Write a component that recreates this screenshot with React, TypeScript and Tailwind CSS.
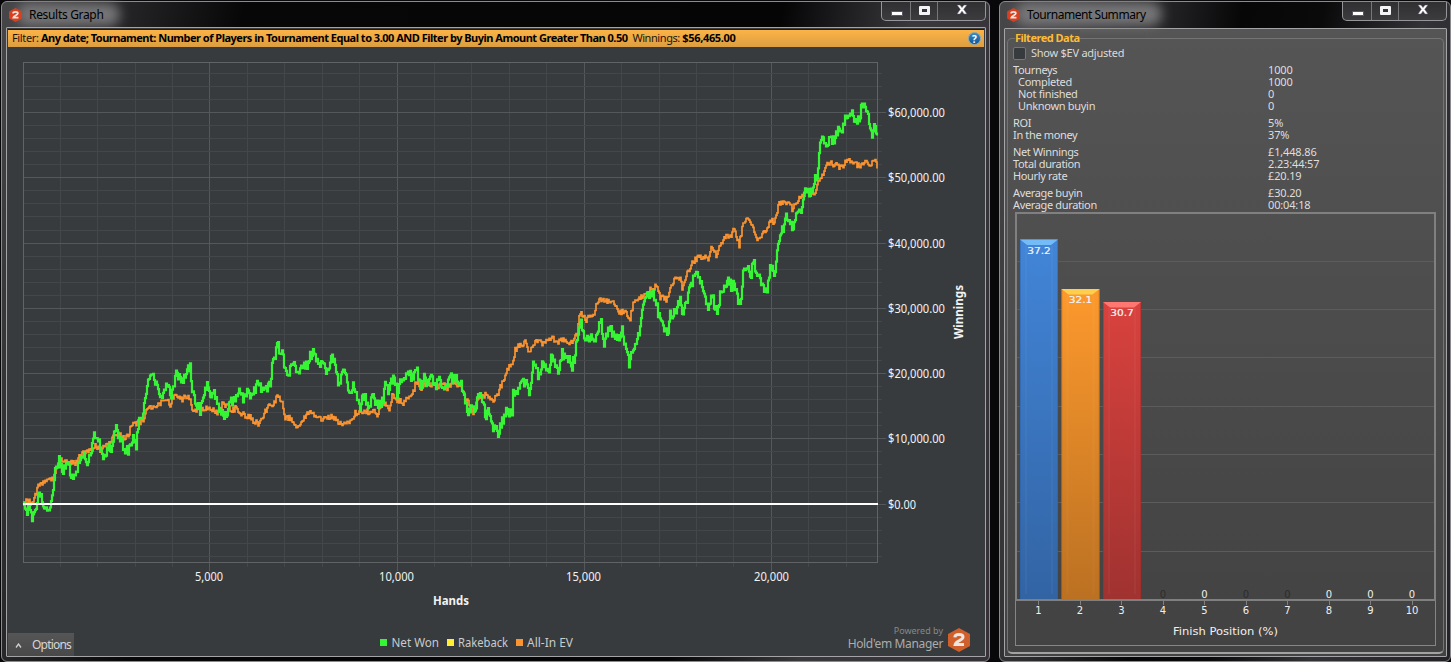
import React from "react";

type Point = [number, number];

// Key points of the two series in chart units.
const EV: Point[] = [[23,502],[28,501],[32,503],[35,496],[38,485],[45,480],[52,480],[55,471],[59,459],[63,461],[75,464],[80,456],[82,452],[90,450],[96,446],[100,451],[110,442],[115,433],[122,437],[128,437],[131,424],[138,423],[143,420],[147,410],[155,405],[160,403],[167,400],[170,404],[173,397],[177,395],[182,400],[188,395],[192,408],[200,410],[207,408],[217,413],[223,403],[232,410],[237,408],[241,413],[245,417],[250,415],[253,422],[259,424],[263,415],[268,408],[273,403],[277,397],[282,402],[285,417],[290,418],[294,427],[298,427],[303,418],[312,411],[317,418],[323,420],[331,417],[340,423],[350,421],[355,413],[360,413],[365,411],[370,414],[373,408],[377,415],[383,403],[389,408],[392,396],[397,400],[403,403],[407,397],[411,398],[415,385],[418,383],[421,390],[425,382],[430,385],[438,388],[443,383],[447,388],[452,382],[460,387],[465,397],[473,412],[478,398],[487,395],[493,401],[497,395],[502,382],[508,368],[512,365],[515,350],[520,345],[525,342],[529,352],[534,342],[543,343],[552,337],[557,343],[562,339],[566,343],[573,342],[577,333],[579,315],[581,313],[585,320],[593,315],[597,303],[602,298],[608,302],[615,303],[617,311],[627,314],[630,318],[633,305],[640,297],[647,292],[657,286],[660,297],[667,300],[670,287],[675,280],[680,280],[682,288],[688,270],[693,262],[698,257],[709,259],[711,248],[717,257],[720,243],[727,235],[730,236],[734,230],[739,245],[742,227],[747,219],[752,225],[757,238],[761,237],[763,229],[766,231],[770,222],[775,221],[778,205],[788,203],[792,209],[797,202],[803,194],[808,190],[815,192],[818,180],[823,173],[828,163],[835,165],[840,168],[848,160],[855,162],[858,166],[865,162],[868,163],[871,168],[873,158],[877,167]];
const NET: Point[] = [[23,505],[26,513],[28,507],[32,519],[35,507],[40,492],[43,507],[50,508],[52,493],[55,473],[59,461],[63,469],[68,463],[70,473],[74,478],[78,467],[83,453],[87,462],[91,453],[93,437],[97,437],[100,448],[103,458],[109,448],[111,453],[113,437],[116,428],[120,438],[125,450],[129,450],[132,438],[136,445],[139,420],[143,412],[146,397],[148,382],[154,377],[159,392],[165,394],[167,382],[171,397],[174,382],[176,369],[180,380],[183,378],[187,368],[190,368],[192,388],[196,403],[200,410],[203,395],[207,387],[210,397],[214,392],[218,408],[223,417],[227,415],[229,398],[233,403],[239,386],[243,398],[248,392],[252,397],[257,383],[264,392],[270,383],[272,368],[275,355],[278,342],[280,355],[282,347],[284,365],[288,377],[293,363],[297,375],[301,363],[308,367],[310,356],[313,354],[317,358],[319,368],[322,360],[326,371],[330,366],[331,356],[335,360],[338,388],[341,376],[346,372],[348,391],[351,397],[353,387],[356,397],[360,411],[363,392],[368,406],[372,397],[379,405],[383,400],[385,384],[388,392],[391,378],[395,383],[397,393],[402,377],[407,374],[413,378],[417,370],[421,387],[424,377],[428,387],[431,373],[435,388],[439,378],[445,391],[449,378],[457,380],[463,388],[465,403],[468,411],[472,405],[474,409],[479,395],[483,398],[485,416],[488,412],[493,427],[498,433],[502,422],[506,410],[512,414],[513,395],[518,388],[525,382],[529,392],[533,365],[539,376],[543,362],[548,375],[552,354],[558,370],[562,354],[566,355],[572,366],[575,355],[577,335],[581,324],[586,342],[590,335],[595,342],[597,330],[601,323],[604,342],[610,328],[617,341],[622,329],[625,347],[629,363],[633,347],[637,343],[641,318],[646,297],[655,295],[658,313],[662,322],[667,335],[670,315],[675,312],[680,302],[682,316],[688,295],[693,280],[698,273],[703,293],[708,307],[712,297],[717,313],[721,288],[725,290],[728,281],[732,288],[734,281],[737,297],[740,308],[743,275],[747,269],[751,278],[753,260],[757,273],[762,285],[766,296],[770,270],[775,272],[778,242],[782,230],[786,217],[788,222],[793,228],[797,215],[801,213],[806,186],[810,196],[815,180],[817,177],[819,150],[823,137],[826,142],[830,138],[833,140],[838,131],[841,133],[844,123],[848,112],[850,118],[852,106],[854,117],[859,122],[861,108],[864,105],[867,113],[870,131],[872,136],[874,120],[877,134]];

// Hand-to-hand variance drawn around the key points, as a stepped line.
function trace(points: Point[], spread: number, salt: number): string {
  let d = `M${points[0][0]} ${points[0][1]}`;
  for (let i = 1; i < points.length; i++) {
    const [x0, y0] = points[i - 1];
    const [x1, y1] = points[i];
    for (let x = x0 + 1; x <= x1; x++) {
      const s = Math.sin(x * 127.1 + salt) * 43758.5453;
      const n = (s - Math.floor(s) - 0.5) * 2 * spread;
      const y = y0 + ((y1 - y0) * (x - x0)) / (x1 - x0) + n;
      d += `H${x}V${y.toFixed(1)}`;
    }
  }
  return d;
}

const range = (n: number) => Array.from({ length: n }, (_, i) => i);

function Logo({ className, fill }: { className: string; fill: string }) {
  return (
    <svg className={className} viewBox="0 0 22 24">
      <path d="M11 0 22 6V18L11 24 0 18V6Z" fill={fill} />
      <path
        d="M6.800 9.400C7 7.200 8.600 6.600 11 6.600c2.500 0 4 .8 4 2.500 0 1.700-1.200 2.300-3.200 3.300-2.300 1.200-4.200 2-4.600 4H16"
        fill="none"
        stroke="#ece4e0"
        strokeWidth="3"
      />
    </svg>
  );
}

function Controls() {
  return (
    <div className="flex h-[19px] w-[105px] rounded-b-[5px] border border-t-0 border-[#96969a] bg-gradient-to-b from-[#303033] to-[#3c3c3e]">
      <div className="flex w-[29px] justify-center border-r border-[#77777b] pl-px pt-[9px]">
        <div className="h-[5px] w-[12px] rounded-[1px] border border-[#55566a] bg-white" />
      </div>
      <div className="flex w-[27px] justify-center border-r border-[#77777b] pt-[4px]">
        <div className="h-[9px] w-[11px] rounded-[1px] border-[3px] border-[#f4f4f6] bg-[#33343c]" />
      </div>
      <div className="flex flex-1 justify-center pt-[2px]">
        <svg className="h-[11px] w-[12px]" viewBox="0 0 12 11">
          <path d="M1 1H4L6 3.600 8 1H11L7.700 5.300 11 10H8L6 7.200 4 10H1L4.300 5.300Z" fill="#fff" stroke="#55566a" strokeWidth=".5" />
        </svg>
      </div>
    </div>
  );
}

function TitleBar({ title, className, track }: { title: string; className: string; track: string }) {
  return (
    <div className={className}>
      <div className="flex h-[25px] items-center pl-[3px]">
        <Logo className="relative z-10 h-[14px] w-[13px]" fill="#d8401f" />
        <div className="relative ml-[7px]">
          <div className="absolute -left-3 -right-4 bottom-0 -top-px rounded-full bg-[#777779] blur-[6px]" />
          <span className={track}>{title}</span>
        </div>
      </div>
      <Controls />
    </div>
  );
}

const xLabels: [string, number, number][] = [["5,000", 209, 28], ["10,000", 396.5, 35], ["15,000", 583.5, 35], ["20,000", 771.5, 35]];

function WinningsChart() {
  return (
    <svg className="ml-px block h-[609px] w-[977px] shrink-0" viewBox="8 47 977 609" fontFamily="'Noto Sans', sans-serif">
      <g shapeRendering="crispEdges" strokeWidth="1">
        {range(22).map((i) => {
          const x = Math.floor(22.8 + (i + 1) * 37.43) + 0.5;
          const major = (i + 1) % 5 === 0;
          return <path key={i} d={`M${x} 63V${major ? 571 : 567}`} stroke={major ? "#54585a" : "#434749"} />;
        })}
        {range(38).map((i) => {
          const y = Math.floor(73.4 + i * 13.05) + 0.5;
          if (y > 562) return null;
          const major = i % 5 === 3;
          return <path key={i} d={`M23 ${y}H${major ? 886 : 882}`} stroke={major ? "#54585a" : "#434749"} />;
        })}
        <rect x="23.5" y="62.5" width="854" height="500" fill="none" stroke="#606466" />
      </g>
      <path d={trace(EV, 3, 3)} fill="none" stroke="#fb9430" strokeWidth="1.7" />
      <path d={trace(NET, 5.2, 8)} fill="none" stroke="#35f535" strokeWidth="2.2" />
      <path d="M23 504H878" stroke="#fff" strokeWidth="2" />
      <g fill="#f2f2f2" fontSize="12">
        {range(7).map((i) => (
          <text key={i} x="888" y={116.9 + i * 65.3} textLength={i === 6 ? 28 : 57} lengthAdjust="spacingAndGlyphs">
            {i === 6 ? "$0.00" : `$${60 - i * 10},000.00`}
          </text>
        ))}
        {xLabels.map(([t, x, w]) => (
          <text key={t} x={x - w / 2} y="581" textLength={w} lengthAdjust="spacingAndGlyphs">{t}</text>
        ))}
        <g fontWeight="700">
          <text x="433" y="605" textLength="36" lengthAdjust="spacingAndGlyphs">Hands</text>
          <text transform="translate(963 339) rotate(-90)" textLength="54" lengthAdjust="spacingAndGlyphs">Winnings</text>
        </g>
      </g>
      <g fill="#c9cbcc" fontSize="12.5">
        <rect x="380" y="639" width="7" height="7" fill="#35f535" />
        <text x="391.5" y="647" textLength="47.5" lengthAdjust="spacingAndGlyphs">Net Won</text>
        <rect x="447" y="639" width="7" height="7" fill="#ffee32" />
        <text x="458" y="647" textLength="50" lengthAdjust="spacingAndGlyphs">Rakeback</text>
        <rect x="516" y="639" width="7" height="7" fill="#fb9430" />
        <text x="527" y="647" textLength="46" lengthAdjust="spacingAndGlyphs">All-In EV</text>
      </g>
    </svg>
  );
}

const bars = [
  { x: 1020, y: 239.5, v: "37.2", face: "url(#blue)", top: "#74bcf8", edge: "#2a5c9c" },
  { x: 1061.5, y: 289, v: "32.1", face: "url(#amber)", top: "#ffce4d", edge: "#b86a16" },
  { x: 1103, y: 302, v: "30.7", face: "url(#red)", top: "#ff7771", edge: "#9c2828" },
];

function FinishChart() {
  return (
    <svg className="ml-[2px] block h-[434px] w-[422px] shrink-0" viewBox="1015 212 422 434" fontFamily="'DejaVu Sans', sans-serif">
      <defs>
        <linearGradient id="blue" x2="0" y2="1"><stop stopColor="#4285d8" /><stop offset="1" stopColor="#3264a4" /></linearGradient>
        <linearGradient id="amber" x2="0" y2="1"><stop stopColor="#fd992d" /><stop offset="1" stopColor="#bb7122" /></linearGradient>
        <linearGradient id="red" x2="0" y2="1"><stop stopColor="#d9423e" /><stop offset="1" stopColor="#a03230" /></linearGradient>
      </defs>
      <rect x="1015.5" y="212.5" width="420" height="433" fill="none" stroke="#858585" />
      {range(7).map((i) => (
        <path key={i} d={`M1017 ${Math.floor(261 + i * 48.35) + 0.5}H1434`} stroke="#5c5c5c" />
      ))}
      <rect x="1016" y="213" width="419" height="387" fill="none" stroke="#808080" strokeWidth="2" />
      {bars.map((b) => (
        <g key={b.v}>
          <rect x={b.x} y={b.y} width="38" height={599 - b.y} fill={b.face} />
          <path d={`M${b.x + 0.5} ${b.y}V599M${b.x + 37.5} ${b.y}V599`} stroke={b.edge} opacity=".4" />
          <path d={`M${b.x + 6} ${b.y + 6}V594M${b.x + 32} ${b.y + 6}V594`} stroke="#fff" opacity=".03" strokeWidth="2" />
          <path d={`M${b.x} ${b.y}H${b.x + 38}L${b.x + 31} ${b.y + 5.5}H${b.x + 7}Z`} fill={b.top} />
          <text x={b.x + 19} y={b.y + 14.4} fill="#f3f5f8" stroke="#f3f5f8" strokeWidth=".2" fontSize="9.5" textAnchor="middle" textLength="23.5" lengthAdjust="spacingAndGlyphs">{b.v}</text>
        </g>
      ))}
      {range(10).map((i) => {
        const x = 1038.5 + i * 41.5;
        return (
          <g key={i} textAnchor="middle" fontSize="10" fill="#f0f0f0">
            <path d={`M${Math.floor(x) + 0.5} 600V605`} stroke="#808080" />
            {i > 2 && <text x={x} y="598" fill={[3, 5, 6].includes(i) ? "#2d2d2d" : "#f0f0f0"}>{0}</text>}
            <text x={x} y="614">{i + 1}</text>
          </g>
        );
      })}
      <text x="1173" y="635" fontSize="11" fill="#f0f0f0" textLength="105" lengthAdjust="spacingAndGlyphs">Finish Position (%)</text>
    </svg>
  );
}

const groups: [string, string, boolean?][][] = [
  [["Tourneys", "1000"], ["Completed", "1000", true], ["Not finished", "0", true], ["Unknown buyin", "0", true]],
  [["ROI", "5%"], ["In the money", "37%"]],
  [["Net Winnings", "£1,448.86"], ["Total duration", "2.23:44:57"], ["Hourly rate", "£20.19"]],
  [["Average buyin", "£30.20"], ["Average duration", "00:04:18"]],
];

export default function App() {
  return (
    <div className="flex h-[662px] w-[1451px] gap-[9px] overflow-hidden bg-[#08080a] pl-px pt-px font-['Noto_Sans',sans-serif]">
      <section className="flex h-[661px] w-[989px] shrink-0 flex-col rounded-[6px] border border-[#8b8a8e] bg-[linear-gradient(100deg,#47474a_0px,#28282a_110px,#070708_240px,#050506_770px,#39383c_900px,#353137_100%)] pl-[4px] pr-[3px]">
        <TitleBar
          title="Results Graph"
          className="flex h-[25px] shrink-0 justify-between"
          track="relative block text-[12px] leading-[22px] tracking-[-0.32px] text-black"
        />
        <div className="relative flex h-[630px] flex-col rounded-[1px] border border-[#a4a4a6] bg-[#373b3e] pt-px">
          <div className="mx-px flex h-[18px] shrink-0 items-start justify-between border-t border-[#211a10] bg-gradient-to-b from-[#fcb347] to-[#dc9e41] pl-[4px] pr-[3px]">
            <div className="whitespace-pre text-[11px] leading-[16px] text-[#1c1407]">
              <span className="tracking-[-0.37px]">Filter: </span>
              <b className="tracking-[-0.498px] text-black">Any date; Tournament: Number of Players in Tournament Equal to 3.00 AND Filter by Buyin Amount Greater Than 0.50</b>
              <span className="tracking-[-0.43px]">  Winnings: </span>
              <b className="tracking-[-0.33px] text-black">$56,465.00</b>
            </div>
            <div className="mt-[2px] flex size-[13px] items-center justify-center rounded-full border border-[#7aa7c0] bg-gradient-to-b from-[#3b8cc4] to-[#0d559c] text-[10px] font-bold leading-none text-white">?</div>
          </div>
          <WinningsChart />
          <div className="absolute bottom-0 left-px flex h-[23px] w-[66px] items-center bg-gradient-to-b from-[#555] to-[#494949] pl-[7px] pt-px text-[12px] text-[#d6d6d6]">
            <svg className="h-[5px] w-[7px]" viewBox="0 0 7 5"><path d="M1 4.500 3.500 1 6 4.500" fill="none" stroke="#d0d0d0" strokeWidth="1.300" /></svg>
            <span className="ml-[10px] tracking-[-0.8px]">Options</span>
          </div>
          <div className="absolute bottom-[4px] right-[15px] flex items-center gap-[5px]">
            <div className="-mt-[5px] text-right">
              <div className="text-[9px] leading-[12px] text-[#85888a]">Powered by</div>
              <div className="text-[12px] leading-[13px] tracking-[-0.35px] text-[#aaacad]">Hold'em Manager</div>
            </div>
            <Logo className="h-[24px] w-[22px]" fill="#cf602b" />
          </div>
        </div>
      </section>

      <section className="flex h-[661px] w-[452px] shrink-0 flex-col rounded-[6px] border border-[#8b8a8e] bg-[linear-gradient(100deg,#47474a_0px,#2d2d2f_140px,#070708_240px,#0a0a0b_320px,#333236_420px,#242127_100%)] pl-[4px] pr-[3px]">
        <TitleBar
          title="Tournament Summary"
          className="flex h-[26px] shrink-0 justify-between"
          track="relative block pt-px text-[12px] leading-[22px] tracking-[-0.45px] text-black"
        />
        <div className="h-[629px] rounded-[1px] border border-[#a4a4a6] bg-gradient-to-b from-[#555] to-[#424242] pl-[2px] pr-[2px] pt-[9px]">
          <div className="relative h-[616px] rounded-[5px] border border-b-2 border-[#747474] border-b-[#a2a2a2] pl-[5px] pt-[7px]">
            <div className="absolute -top-[9px] left-[7px] bg-[#545454] text-[11px] font-bold leading-[15px] tracking-[-0.5px] text-[#fdbb36]">Filtered Data</div>
            <div className="flex h-[14px] items-center">
              <div className="size-[13px] rounded-[2px] border border-[#777] bg-[#373b3e]" />
              <span className="ml-[5px] text-[11px] leading-[14px] tracking-[-0.25px] text-[#dadada]">Show $EV adjusted</span>
            </div>
            <div className="flex h-[152px] flex-col gap-[5px] pt-[4px] text-[11px] leading-[12px] text-[#dedede]">
              {groups.map((g, i) => (
                <div key={i}>
                  {g.map(([label, value, nested]) => (
                    <div key={label} className="flex h-[12px]">
                      <span className={nested ? "w-[255px] pl-[5px] tracking-[-0.3px]" : "w-[255px] tracking-[-0.35px]"}>{label}</span>
                      <span className="tracking-[-0.15px]">{value}</span>
                    </div>
                  ))}
                </div>
              ))}
            </div>
            <FinishChart />
          </div>
        </div>
      </section>
    </div>
  );
}
